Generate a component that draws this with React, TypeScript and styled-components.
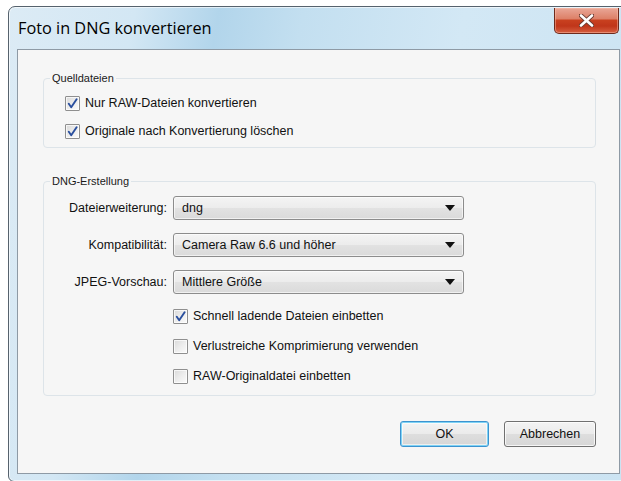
import React from "react";
import styled, { createGlobalStyle } from "styled-components";

const Global = createGlobalStyle`
  html, body { margin: 0; padding: 0; background: #ffffff; overflow: hidden; }
  #root { width: 621px; height: 481px; overflow: hidden; }
`;

const Window = styled.div`
  margin: 6px 0 0 8px;
  width: 621px;
  height: 476px;
  box-sizing: border-box;
  border: 1px solid #56626d;
  border-radius: 7px 7px 6px 6px;
  padding: 0 8px 7px;
  display: flex;
  flex-direction: column;
  background: linear-gradient(
    100deg,
    #dcebf5 0%,
    #d3e7f4 18%,
    #b2d5eb 30%,
    #c3dff0 42%,
    #d3e8f5 65%,
    #cbe3f2 100%
  );
  box-shadow: inset 0 0 0 1px rgba(255, 255, 255, 0.6);
`;

const TitleBar = styled.div`
  height: 42px;
  flex: none;
  display: flex;
  align-items: flex-start;
  justify-content: space-between;
`;

const Title = styled.div`
  margin: 11px 0 0 1px;
  font-family: "Open Sans", "Noto Sans", sans-serif;
  font-size: 16.3px;
  line-height: 20px;
  color: #000;
`;

const CloseButton = styled.div`
  margin: 1px 1px 0 0;
  width: 65px;
  height: 26px;
  box-sizing: border-box;
  border: 1px solid #6e2a1c;
  border-top: none;
  border-radius: 0 0 5px 5px;
  display: flex;
  align-items: center;
  justify-content: center;
  background: linear-gradient(
    180deg,
    #e9a797 0%,
    #dd8169 42%,
    #c8401f 50%,
    #c0361a 72%,
    #d65f40 100%
  );
  box-shadow: inset 0 0 0 1px rgba(255, 200, 180, 0.45);
`;

const Client = styled.div`
  flex: 1;
  border: 1px solid #8e9aa5;
  background: #f6f6f6;
  display: flex;
  flex-direction: column;
  padding: 22px 23px 0 25px;
  font-family: "Liberation Sans", Arial, sans-serif;
  font-size: 12.5px;
  color: #111;
`;

const Group = styled.fieldset<{ $gap?: number }>`
  margin: ${(p) => p.$gap ?? 0}px 0 0;
  padding: 0;
  min-width: 0;
  border: 1px solid #dde4e9;
  border-radius: 4px;
`;

const Caption = styled.legend`
  margin-left: 6px;
  padding: 0 2px;
  font-size: 11px;
  line-height: 13px;
  color: #1a1a1a;
`;

const SourceList = styled.div`
  padding: 4px 0 2px 21px;
  display: flex;
  flex-direction: column;
`;

const CheckRow = styled.label<{ $h: number }>`
  height: ${(p) => p.$h}px;
  display: flex;
  align-items: center;
  gap: 5px;
`;

const Box = styled.span`
  width: 15px;
  height: 15px;
  box-sizing: border-box;
  border: 1px solid #8f8f8f;
  border-radius: 1px;
  background: linear-gradient(135deg, #d9d9d9 0%, #eeeeee 55%, #fbfbfb 100%);
  box-shadow: inset 0 0 0 1px rgba(255, 255, 255, 0.7);
  display: flex;
  align-items: center;
  justify-content: center;
  flex: none;
`;

const Form = styled.div`
  padding: 8px 0 4px;
`;

const FieldGrid = styled.div`
  display: grid;
  grid-template-columns: 123px 291px;
  column-gap: 6px;
  row-gap: 13px;
  align-items: center;
`;

const FieldLabel = styled.span`
  text-align: right;
`;

const Select = styled.div`
  height: 24px;
  box-sizing: border-box;
  border: 1px solid #8c8c8c;
  border-radius: 3px;
  padding: 0 8px 0 8px;
  display: flex;
  align-items: center;
  justify-content: space-between;
  background: linear-gradient(180deg, #f4f4f4 0%, #ececec 50%, #e2e2e2 51%, #dadada 100%);
  box-shadow: inset 0 0 0 1px rgba(255, 255, 255, 0.6);
`;

const OptionList = styled.div`
  margin: 7px 0 0 129px;
  display: flex;
  flex-direction: column;
`;

const Actions = styled.div`
  margin-top: 25px;
  display: flex;
  justify-content: flex-end;
  gap: 15px;
`;

const Button = styled.div<{ $default?: boolean; $w: number }>`
  width: ${(p) => p.$w}px;
  height: 26px;
  box-sizing: border-box;
  border: 1px solid ${(p) => (p.$default ? "#3c93cf" : "#707070")};
  border-radius: 3px;
  display: flex;
  align-items: center;
  justify-content: center;
  background: linear-gradient(180deg, #f3f3f3 0%, #ebebeb 50%, #dedede 51%, #d6d6d6 100%);
  box-shadow: ${(p) =>
    p.$default
      ? "inset 0 0 0 1px #7fd3f5, inset 0 0 0 2px rgba(255,255,255,0.6)"
      : "inset 0 0 0 1px rgba(255,255,255,0.75)"};
`;

const Check = () => (
  <svg width="11" height="11" viewBox="0 0 11 11">
    <path d="M1.8 5.8 L4.2 9.2 L9.6 1.2" fill="none" stroke="#2a4f9e" strokeWidth="1.9" strokeLinecap="round" strokeLinejoin="round" />
  </svg>
);

const Arrow = () => (
  <svg width="10" height="6" viewBox="0 0 10 6">
    <path d="M0 0 H10 L5 6 Z" fill="#111" />
  </svg>
);

const CloseGlyph = () => (
  <svg width="15" height="13" viewBox="0 0 15 13">
    <path
      d="M2 1.5 L13 11.5 M13 1.5 L2 11.5"
      stroke="#6b3a30"
      strokeWidth="4.4"
      strokeLinecap="round"
      fill="none"
    />
    <path
      d="M2 1.5 L13 11.5 M13 1.5 L2 11.5"
      stroke="#ffffff"
      strokeWidth="2.6"
      strokeLinecap="round"
      fill="none"
    />
  </svg>
);

const CheckItem = ({ checked, h, children }: { checked?: boolean; h: number; children: React.ReactNode }) => (
  <CheckRow $h={h}>
    <Box>{checked && <Check />}</Box>
    <span>{children}</span>
  </CheckRow>
);

const fields = [
  ["Dateierweiterung:", "dng"],
  ["Kompatibilität:", "Camera Raw 6.6 und höher"],
  ["JPEG-Vorschau:", "Mittlere Größe"],
];

export default function App() {
  return (
    <>
      <Global />
      <Window>
        <TitleBar>
          <Title>Foto in DNG konvertieren</Title>
          <CloseButton>
            <CloseGlyph />
          </CloseButton>
        </TitleBar>
        <Client>
          <Group>
            <Caption>Quelldateien</Caption>
            <SourceList>
              <CheckItem checked h={28}>Nur RAW-Dateien konvertieren</CheckItem>
              <CheckItem checked h={28}>Originale nach Konvertierung löschen</CheckItem>
            </SourceList>
          </Group>
          <Group $gap={27}>
            <Caption>DNG-Erstellung</Caption>
            <Form>
              <FieldGrid>
                {fields.map(([label, value]) => (
                  <React.Fragment key={label}>
                    <FieldLabel>{label}</FieldLabel>
                    <Select>
                      <span>{value}</span>
                      <Arrow />
                    </Select>
                  </React.Fragment>
                ))}
              </FieldGrid>
              <OptionList>
                <CheckItem checked h={30}>Schnell ladende Dateien einbetten</CheckItem>
                <CheckItem h={30}>Verlustreiche Komprimierung verwenden</CheckItem>
                <CheckItem h={30}>RAW-Originaldatei einbetten</CheckItem>
              </OptionList>
            </Form>
          </Group>
          <Actions>
            <Button $default $w={89}>OK</Button>
            <Button $w={92}>Abbrechen</Button>
          </Actions>
        </Client>
      </Window>
    </>
  );
}
